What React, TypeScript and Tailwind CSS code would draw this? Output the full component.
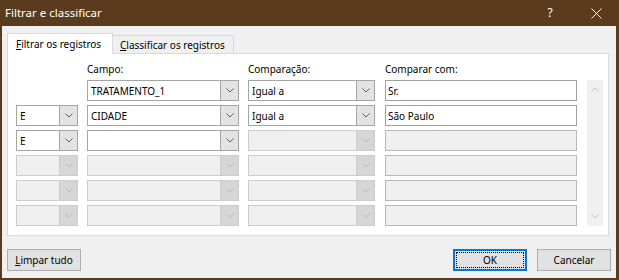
import React from 'react'

interface ComboProps {
  value?: string
  enabled: boolean
  width: string
}

function Chevron({ color }: { color: string }) {
  return (
    <svg width="8" height="5" viewBox="0 0 8 5" fill="none">
      <path d="M0.5 0.5 L4 4 L7.5 0.5" stroke={color} strokeWidth="1" />
    </svg>
  )
}

function Combo({ value, enabled, width }: ComboProps) {
  return (
    <div
      className={`${width} h-[21px] flex border ${
        enabled ? 'bg-white border-[#a5a5a5]' : 'bg-[#f0f0f0] border-[#cccccc]'
      }`}
    >
      <div className="flex-1 flex items-center pl-[3px] text-black">{value}</div>
      <div
        className={`w-[18px] flex items-center justify-center border-l ${
          enabled ? 'bg-[#e3e3e3] border-[#a5a5a5]' : 'bg-[#d6d6d6] border-[#cccccc]'
        }`}
      >
        <Chevron color={enabled ? '#5f5f5f' : '#b9b9b9'} />
      </div>
    </div>
  )
}

function TextBox({ value, enabled }: { value?: string; enabled: boolean }) {
  return (
    <div
      className={`w-[192px] h-[21px] ml-[10px] flex items-center pl-[2px] border ${
        enabled ? 'bg-white border-[#a0a0a0]' : 'bg-[#f0f0f0] border-[#b8b8b8]'
      }`}
    >
      {value}
    </div>
  )
}

const rows = [
  { op: null, field: 'TRATAMENTO_1', cmp: 'Igual a', val: 'Sr.', enabled: true, fieldOn: true, cmpOn: true },
  { op: 'E', field: 'CIDADE', cmp: 'Igual a', val: 'São Paulo', enabled: true, fieldOn: true, cmpOn: true },
  { op: 'E', field: '', cmp: '', val: '', enabled: true, fieldOn: true, cmpOn: false },
  { op: '', field: '', cmp: '', val: '', enabled: false, fieldOn: false, cmpOn: false },
  { op: '', field: '', cmp: '', val: '', enabled: false, fieldOn: false, cmpOn: false },
  { op: '', field: '', cmp: '', val: '', enabled: false, fieldOn: false, cmpOn: false },
]

export default function App() {
  return (
    <div className="w-[619px] h-[280px] bg-[#5b3b1d] flex flex-col font-['Noto_Sans',sans-serif] text-[10px] text-black leading-none">
      {/* Title bar */}
      <div className="h-[26px] flex items-center text-white">
        <span className="pl-[5px] text-[11.5px]">Filtrar e classificar</span>
        <div className="ml-auto flex h-full">
          <div className="w-[46px] flex items-center justify-center text-[12px]">?</div>
          <div className="w-[46px] flex items-center justify-center">
            <svg width="11" height="11" viewBox="0 0 11 11">
              <path d="M0.5 0.5 L10.5 10.5 M10.5 0.5 L0.5 10.5" stroke="#ffffff" strokeWidth="1" />
            </svg>
          </div>
        </div>
      </div>

      {/* Body */}
      <div className="flex-1 ml-[2px] mr-[3px] mb-[2px] bg-[#f0f0f0] flex flex-col pl-[5px] pt-[7px]">
        {/* Tabs */}
        <div className="h-[20px] flex items-end">
          <div className="relative z-10 w-[106px] h-[21px] mb-[-1px] pl-[8px] flex items-center bg-white border-x border-t border-[#d9d9d9]">
            <span>
              <span className="underline">F</span>iltrar os registros
            </span>
          </div>
          <div className="w-[121px] h-[18px] pl-[7px] flex items-center border-t border-r border-[#d9d9d9]">
            <span>
              <span className="underline">C</span>lassificar os registros
            </span>
          </div>
        </div>

        {/* Panel */}
        <div className="w-[602px] h-[183px] bg-white border border-[#d9d9d9] pt-[10px] pl-[8px]">
          <div className="h-[16px] flex items-start">
            <div className="w-[62px]" />
            <div className="w-[152px] ml-[9px]">Campo:</div>
            <div className="w-[127px] ml-[9px]">Comparação:</div>
            <div className="w-[192px] ml-[10px]">Comparar com:</div>
          </div>
          <div className="flex">
            <div className="flex flex-col gap-[4px]">
              {rows.map((r, i) => (
                <div key={i} className="flex">
                  {r.op === null ? (
                    <div className="w-[62px] h-[21px]" />
                  ) : (
                    <Combo value={r.op} enabled={r.enabled} width="w-[62px]" />
                  )}
                  <div className="ml-[9px]">
                    <Combo value={r.field} enabled={r.fieldOn} width="w-[152px]" />
                  </div>
                  <div className="ml-[9px]">
                    <Combo value={r.cmp} enabled={r.cmpOn} width="w-[127px]" />
                  </div>
                  <TextBox value={r.val} enabled={i < 2} />
                </div>
              ))}
            </div>
            {/* Scrollbar */}
            <div className="w-[16px] h-[146px] ml-[10px] bg-[#f0f0f0] flex flex-col items-center justify-between py-[7px]">
              <svg width="8" height="5" viewBox="0 0 8 5" fill="none">
                <path d="M0.5 4.5 L4 1 L7.5 4.5" stroke="#c2c2c2" strokeWidth="1" />
              </svg>
              <Chevron color="#c2c2c2" />
            </div>
          </div>
        </div>

        {/* Buttons */}
        <div className="flex mt-[13px] pr-[5px]">
          <button className="w-[74px] h-[22px] bg-[#e1e1e1] border border-[#adadad] flex items-center justify-center">
            <span>
              <span className="underline">L</span>impar tudo
            </span>
          </button>
          <button className="ml-auto w-[74px] h-[22px] bg-[#e1e1e1] border-2 border-[#0078d7] p-[1px] flex">
            <div className="flex-1 border border-dotted border-black flex items-center justify-center">OK</div>
          </button>
          <button className="ml-[10px] w-[74px] h-[22px] bg-[#e1e1e1] border border-[#adadad] flex items-center justify-center">
            Cancelar
          </button>
        </div>
      </div>
    </div>
  )
}
